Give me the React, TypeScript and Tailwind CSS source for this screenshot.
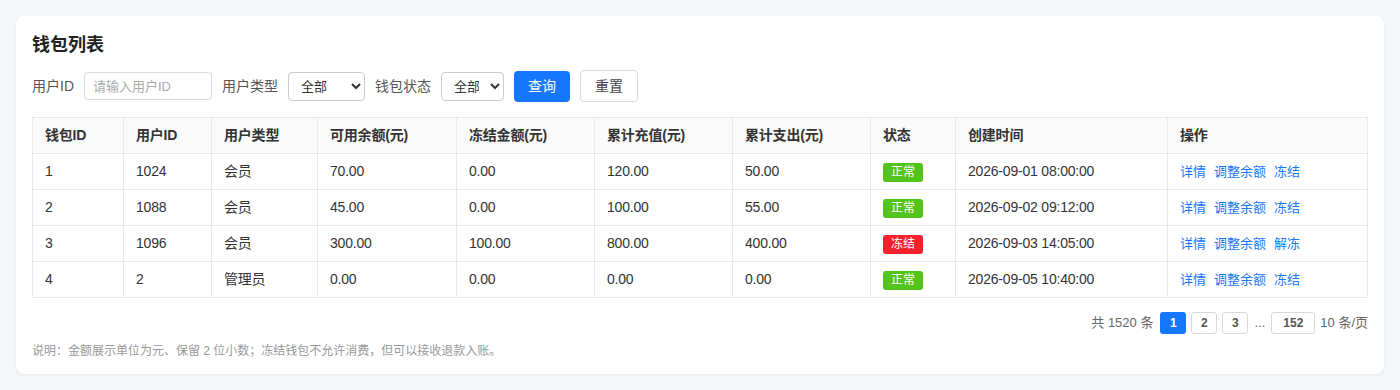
const rows = [
  { id: 1, uid: "1024", type: "会员", avail: "70.00", frozen: "0.00", rech: "120.00", spent: "50.00", status: "正常", time: "2026-09-01 08:00:00", act: "冻结" },
  { id: 2, uid: "1088", type: "会员", avail: "45.00", frozen: "0.00", rech: "100.00", spent: "55.00", status: "正常", time: "2026-09-02 09:12:00", act: "冻结" },
  { id: 3, uid: "1096", type: "会员", avail: "300.00", frozen: "100.00", rech: "800.00", spent: "400.00", status: "冻结", time: "2026-09-03 14:05:00", act: "解冻" },
  { id: 4, uid: "2", type: "管理员", avail: "0.00", frozen: "0.00", rech: "0.00", spent: "0.00", status: "正常", time: "2026-09-05 10:40:00", act: "冻结" },
];

const headers = ["钱包ID", "用户ID", "用户类型", "可用余额(元)", "冻结金额(元)", "累计充值(元)", "累计支出(元)", "状态", "创建时间", "操作"];
const widths = [91, 88, 106, 139, 138, 138, 138, 85, 212, 200];

const App = () => {
  return (
    <div
      className="min-h-screen bg-[#f5f6fa] p-4 text-[#333]"
      style={{ fontFamily: '"Liberation Sans", "Noto Sans CJK SC", sans-serif' }}
    >
      <div className="bg-white rounded-lg shadow-[0_1px_4px_rgba(0,0,0,0.06)] p-4 pb-[14px]">
        {/* Title */}
        <h2 className="text-[18px] leading-[26px] font-bold text-[#222] m-0">钱包列表</h2>

        {/* Filters */}
        <div className="flex items-center gap-[10px] mt-3 text-[14px] text-[#555]">
          <span>用户ID</span>
          <input
            className="w-[128px] h-[28px] border border-[#d9d9d9] rounded px-2 text-[13px] outline-none placeholder:text-[#aaa]"
            placeholder="请输入用户ID"
          />
          <span>用户类型</span>
          <select className="w-[77px] h-[29px] border border-[#ccc] rounded px-2 text-[13px] text-[#333] bg-white">
            <option>全部</option>
          </select>
          <span>钱包状态</span>
          <select className="w-[63px] h-[29px] border border-[#ccc] rounded px-2 text-[13px] text-[#333] bg-white">
            <option>全部</option>
          </select>
          <button className="w-[56px] h-[31px] rounded bg-[#1677ff] text-white text-[14px]">查询</button>
          <button className="w-[58px] h-[32px] rounded border border-[#d9d9d9] bg-white text-[#444] text-[14px]">重置</button>
        </div>

        {/* Table */}
        <table className="mt-[15px] w-full table-fixed border-collapse text-[14px] tracking-[-0.2px]">
          <colgroup>
            {widths.map((w, i) => (
              <col key={i} style={{ width: w }} />
            ))}
          </colgroup>
          <thead>
            <tr className="bg-[#fafafa]">
              {headers.map((h) => (
                <th key={h} className="h-[36px] px-3 text-left font-bold text-[#333] border border-[#e8e8e8]">
                  {h}
                </th>
              ))}
            </tr>
          </thead>
          <tbody>
            {rows.map((r) => (
              <tr key={r.id}>
                <td className="h-[36px] px-3 border border-[#e8e8e8]">{r.id}</td>
                <td className="px-3 border border-[#e8e8e8]">{r.uid}</td>
                <td className="px-3 border border-[#e8e8e8]">{r.type}</td>
                <td className="px-3 border border-[#e8e8e8]">{r.avail}</td>
                <td className="px-3 border border-[#e8e8e8]">{r.frozen}</td>
                <td className="px-3 border border-[#e8e8e8]">{r.rech}</td>
                <td className="px-3 border border-[#e8e8e8]">{r.spent}</td>
                <td className="px-3 border border-[#e8e8e8]">
                  <span
                    className={`inline-flex items-center justify-center h-[19px] px-2 rounded-[3px] text-[12px] tracking-normal text-white ${
                      r.status === "正常" ? "bg-[#52c41a]" : "bg-[#f5222d]"
                    }`}
                  >
                    {r.status}
                  </span>
                </td>
                <td className="px-3 border border-[#e8e8e8]">{r.time}</td>
                <td className="px-3 border border-[#e8e8e8] text-[13px] tracking-normal text-[#1677ff]">
                  <span>详情</span>
                  <span className="ml-2">调整余额</span>
                  <span className="ml-2">{r.act}</span>
                </td>
              </tr>
            ))}
          </tbody>
        </table>

        {/* Pagination */}
        <div className="flex items-center justify-end gap-[5px] mt-[14px] text-[13px] text-[#666]">
          <span className="mr-[2px]">共 1520 条</span>
          <span className="min-w-[26px] h-[22px] px-[6px] rounded-[3px] bg-[#1677ff] text-white text-[12px] font-bold flex items-center justify-center">1</span>
          <span className="min-w-[26px] h-[22px] px-[6px] rounded-[3px] border border-[#d9d9d9] text-[#555] text-[12px] font-bold flex items-center justify-center">2</span>
          <span className="min-w-[26px] h-[22px] px-[6px] rounded-[3px] border border-[#d9d9d9] text-[#555] text-[12px] font-bold flex items-center justify-center">3</span>
          <span className="px-[1px]">...</span>
          <span className="min-w-[26px] h-[22px] px-[11px] rounded-[3px] border border-[#d9d9d9] text-[#555] text-[12px] font-bold flex items-center justify-center">152</span>
          <span>10 条/页</span>
        </div>

        {/* Note */}
        <p className="mt-[8px] text-[12px] leading-[18px] text-[#999] m-0">
          说明：金额展示单位为元、保留 2 位小数；冻结钱包不允许消费，但可以接收退款入账。
        </p>
      </div>
    </div>
  );
};

export default App;
